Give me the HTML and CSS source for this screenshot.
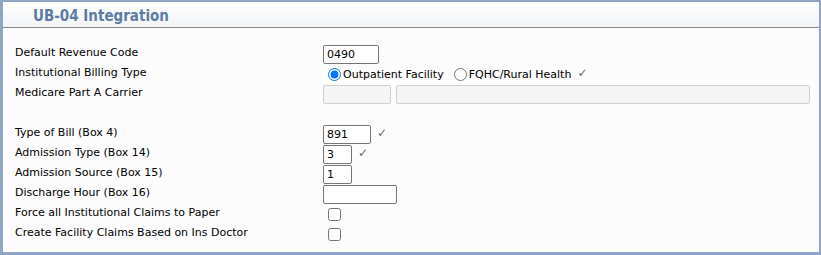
FILE: index.html
```html
<!DOCTYPE html>
<html lang="en">

<head>
  <meta charset="UTF-8">
  <meta name="viewport" content="width=device-width, initial-scale=1.0">
  <title>UB-04 Integration</title>
  <link rel="stylesheet" href="styles.css">
</head>

<body>
  <div class="panel">
    <div class="panel-header">
      <h2>UB-04 Integration</h2>
    </div>

    <div class="form">
      <label class="label">Default Revenue Code</label>
      <div class="field"><input class="text w56" type="text" value="0490"></div>

      <label class="label">Institutional Billing Type</label>
      <div class="field">
        <label class="radio"><input type="radio" name="btype" checked> Outpatient Facility</label>
        <label class="radio"><input type="radio" name="btype"> FQHC/Rural Health</label>
        <span class="check">&#10003;</span>
      </div>

      <label class="label">Medicare Part A Carrier</label>
      <div class="field">
        <input class="text disabled w68" type="text" disabled>
        <input class="text disabled grow" type="text" disabled>
      </div>

      <div class="spacer"></div>

      <label class="label">Type of Bill (Box 4)</label>
      <div class="field"><input class="text w48" type="text" value="891"> <span class="check">&#10003;</span></div>

      <label class="label">Admission Type (Box 14)</label>
      <div class="field"><input class="text w29" type="text" value="3"> <span class="check">&#10003;</span></div>

      <label class="label">Admission Source (Box 15)</label>
      <div class="field"><input class="text w29" type="text" value="1"></div>

      <label class="label">Discharge Hour (Box 16)</label>
      <div class="field"><input class="text w74" type="text"></div>

      <label class="label">Force all Institutional Claims to Paper</label>
      <div class="field"><input class="box" type="checkbox"></div>

      <label class="label">Create Facility Claims Based on Ins Doctor</label>
      <div class="field"><input class="box" type="checkbox"></div>
    </div>
  </div>
</body>

</html>
```

FILE: styles.css
```css
body {
  margin: 0;
  font-family: "DejaVu Sans", Verdana, sans-serif;
  font-size: 11px;
  color: #000;
  background: #fff;
}

.panel {
  width: 821px;
  height: 255px;
  box-sizing: border-box;
  border: 2px solid #8fa5c5;
  border-left-width: 3px;
  border-bottom-width: 3px;
  background: #fcfcfc;
}

.panel-header {
  height: 25px;
  border-bottom: 1px solid #8a8a8a;
  background: linear-gradient(#ffffff, #f1f3f6);
  padding-left: 30px;
}

.panel-header h2 {
  margin: 0;
  padding-top: 5px;
  font-family: "DejaVu Sans Condensed", "DejaVu Sans", sans-serif;
  font-size: 15px;
  font-weight: bold;
  color: #5d7ca4;
}

.form {
  display: grid;
  grid-template-columns: 308px 1fr;
  grid-auto-rows: 20px;
  padding: 16px 9px 0 12px;
}

.label {
  display: flex;
  align-items: center;
  padding-bottom: 3px;
}

.field {
  display: flex;
  align-items: center;
  gap: 5px;
}

.spacer {
  grid-column: 1 / 3;
}

.text {
  height: 19px;
  box-sizing: border-box;
  margin: 0;
  padding: 1px 3px;
  border: 1px solid #767676;
  border-radius: 2px;
  background: #fff;
  font-family: inherit;
  font-size: 11px;
}

.disabled {
  border-color: #cfcfcf;
  background: #f5f5f5;
}

.w29 {
  width: 29px;
}

.w48 {
  width: 48px;
}

.w56 {
  width: 56px;
}

.w68 {
  width: 68px;
}

.w74 {
  width: 74px;
}

.grow {
  flex: 1;
}

.radio {
  display: flex;
  align-items: center;
  gap: 2px;
}

.radio input {
  margin: 0 0 0 5px;
  width: 13px;
  height: 13px;
}

.box {
  margin: 0 0 0 5px;
  width: 13px;
  height: 13px;
}

.check {
  color: #666;
  font-size: 12px;
  margin-left: 1px;
  padding-bottom: 3px;
}
```
